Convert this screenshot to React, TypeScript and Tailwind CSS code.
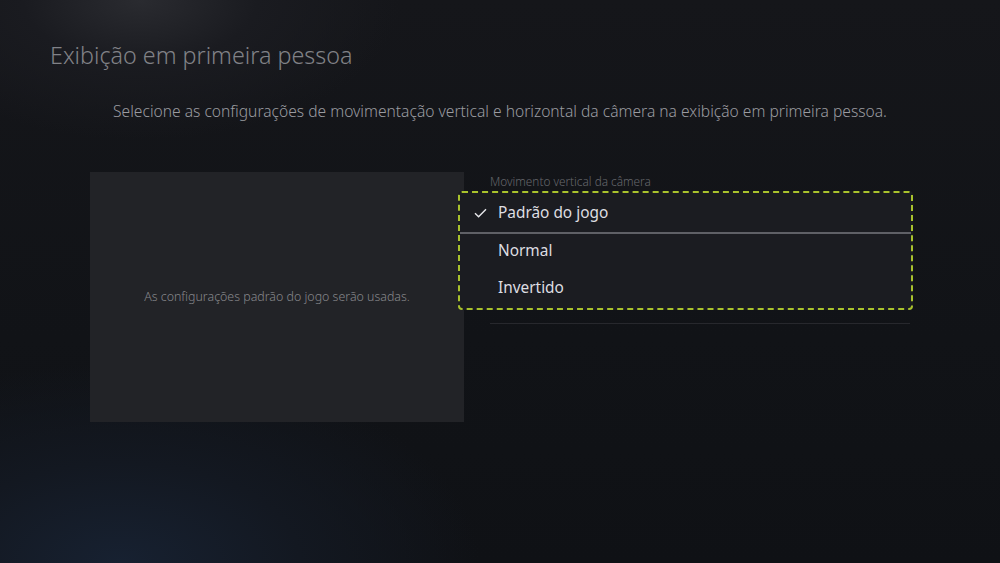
import React from "react";

export default function App() {
  const font = { fontFamily: '"Noto Sans", "Open Sans", Arial, sans-serif' };
  return (
    <div
      className="relative w-[1000px] h-[563px] overflow-hidden bg-[#101217] bg-[radial-gradient(ellipse_260px_140px_at_140px_0px,#2a2b30_0%,#1a1b20_45%,transparent_100%),radial-gradient(ellipse_360px_200px_at_120px_563px,#172131_0%,#131821_50%,transparent_100%),linear-gradient(180deg,#15161a_0%,#111317_60%,#0f1115_100%)]"
      style={font}
    >
      <div className="pl-[50px] pt-[39px] text-[23.3px] leading-[32px] font-light text-[#818287]">
        Exibição em primeira pessoa
      </div>
      <div className="mt-[28px] text-center text-[15.6px] leading-[24px] font-light text-[#9a9ba0]">
        Selecione as configurações de movimentação vertical e horizontal da câmera na exibição em primeira pessoa.
      </div>

      <div className="mt-[49px] flex pl-[90px] gap-[26px]">
        <div className="w-[374px] h-[250px] bg-[#222327] flex items-center justify-center">
          <span className="text-[12.4px] leading-[18px] font-light text-[#86878b]">
            As configurações padrão do jogo serão usadas.
          </span>
        </div>
        <div className="w-[420px] flex flex-col">
          <div className="pt-[1px] text-[11.8px] leading-[16px] font-light text-[#66676c]">
            Movimento vertical da câmera
          </div>
          <div className="mt-[96px] text-[15.4px] leading-[24px] text-[#c8c8cc]">Padrão do jogo</div>
          <div className="mt-[14px] h-px bg-[#27282d]" />
        </div>
      </div>

      {/* Open dropdown overlay */}
      <div className="absolute left-[458px] top-[191px] w-[455px] h-[119px] rounded-[4px] border-2 border-dashed border-[#a9c22c] bg-[#1b1c21] text-[15.4px] text-[#dedee2]">
        <div className="h-[39px] flex items-center relative pl-[38px]">
          <svg
            className="absolute left-[14px] top-[15px]"
            width="13"
            height="10"
            viewBox="0 0 13 10"
            fill="none"
          >
            <path d="M1 5.2 L4.6 8.8 L12 1.2" stroke="#e8e8ec" strokeWidth="1.4" />
          </svg>
          <span className="leading-[24px]">Padrão do jogo</span>
        </div>
        <div className="h-[2px] bg-[#5f6066]" />
        <div className="h-[34px] flex items-center pl-[38px]">
          <span className="leading-[24px]">Normal</span>
        </div>
        <div className="h-[40px] flex items-center pl-[38px]">
          <span className="leading-[24px]">Invertido</span>
        </div>
      </div>
    </div>
  );
}
